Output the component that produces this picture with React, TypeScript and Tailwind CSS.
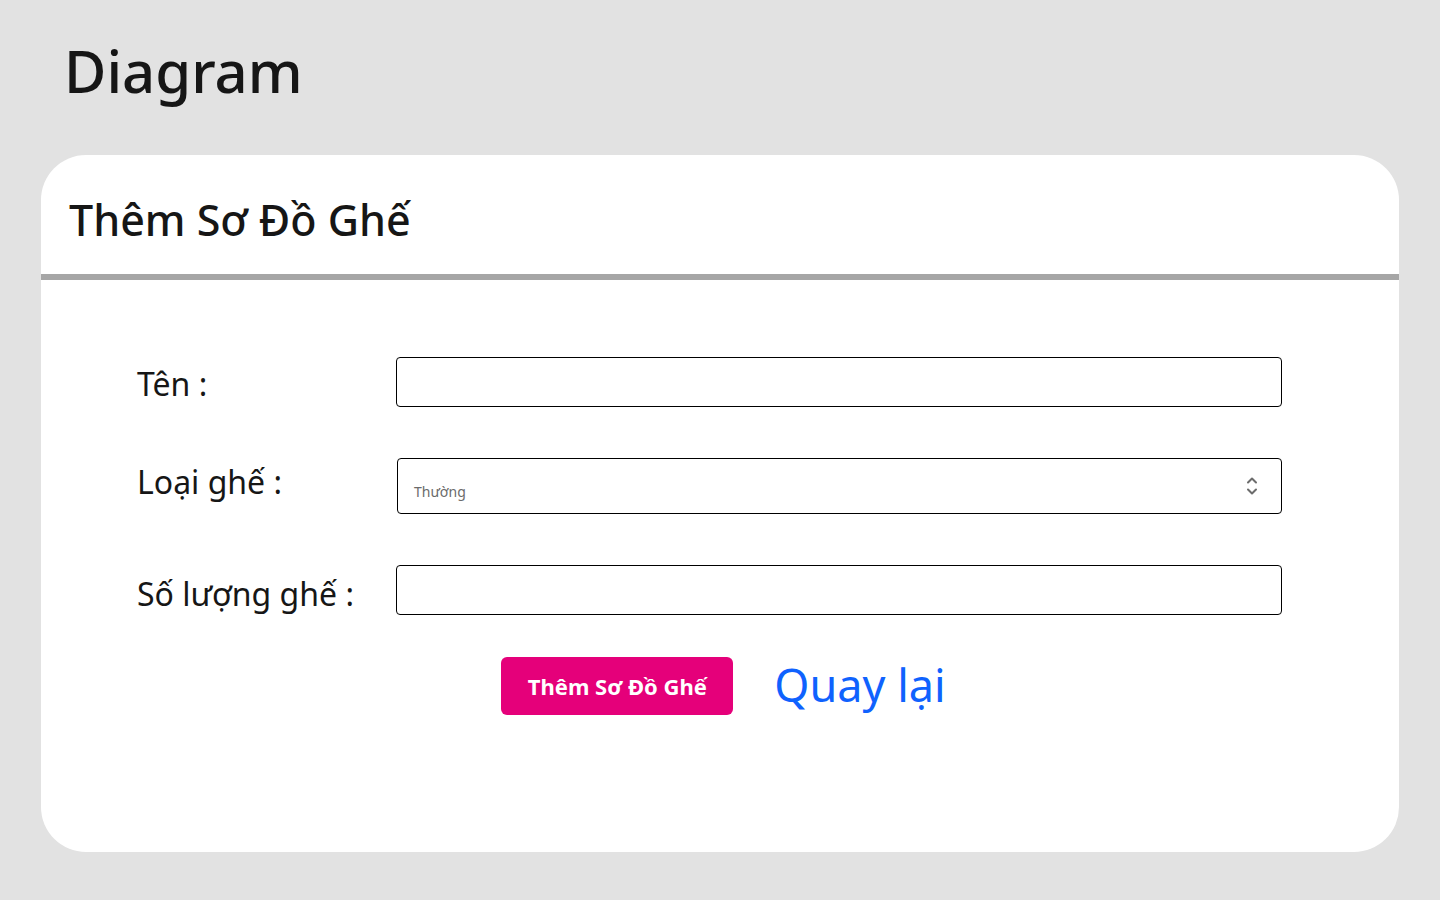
import { useState } from 'react';

export default function App() {
  const [form, setForm] = useState({ name: '', type: 'Thường', count: '' });

  const rowLabel = 'w-[259px] shrink-0 text-[32px] text-[#161616] leading-none';
  const inputCls = 'flex-1 h-[50px] border border-black rounded-[4px] px-3 text-base focus:outline-none';

  return (
    <div className="min-h-screen bg-[#e2e2e2] px-[41px] pb-[47px] font-['Noto_Sans',sans-serif] text-[#161616]">
      <h1 className="h-[155px] pl-[23px] flex items-center text-[58px] font-medium leading-none pb-[14px]">Diagram</h1>

      <div className="bg-white rounded-[45px] h-[697px] overflow-hidden">
        <div className="h-[125px] border-b-[6px] border-[#a6a6a6] flex items-center px-[28px] pt-[10px]">
          <h2 className="text-[43px] font-medium leading-none">Thêm Sơ Đồ Ghế</h2>
        </div>

        <form className="pt-[77px] pl-[96px] pr-[117px]" onSubmit={(e) => e.preventDefault()}>
          <div className="flex items-center">
            <label className={rowLabel + ' mt-[4px]'}>Tên :</label>
            <input
              className={inputCls}
              value={form.name}
              onChange={(e) => setForm((f) => ({ ...f, name: e.target.value }))}
            />
          </div>

          <div className="flex items-center mt-[51px]">
            <label className={rowLabel + ' -mt-[8px]'}>Loại ghế :</label>
            <div className="flex-1 ml-px h-[56px] border border-black rounded-[4px] flex items-center justify-between pl-4 pr-[22px]">
              <span className="text-[14px] text-[#6b6b6b] pt-[10px]">{form.type}</span>
              <svg width="14" height="24" viewBox="0 0 14 24" fill="none" stroke="#6c6c6c" strokeWidth="2" strokeLinecap="round" strokeLinejoin="round">
                <path d="M3 8.5 7 4.5l4 4" />
                <path d="M3 15.5l4 4 4-4" />
              </svg>
            </div>
          </div>

          <div className="flex items-center mt-[51px]">
            <label className={rowLabel + ' mt-[8px]'}>Số lượng ghế :</label>
            <input
              className={inputCls}
              value={form.count}
              onChange={(e) => setForm((f) => ({ ...f, count: e.target.value }))}
            />
          </div>

          <div className="flex items-center justify-center gap-[41px] mt-[42px] pl-[28px]">
            <button type="submit" className="w-[232px] h-[58px] rounded-[6px] bg-[#e5007a] text-white text-[22px] font-bold">
              Thêm Sơ Đồ Ghế
            </button>
            <a href="#" className="text-[45px] text-[#0f62fe] leading-none pb-[4px]">Quay lại</a>
          </div>
        </form>
      </div>
    </div>
  );
}
